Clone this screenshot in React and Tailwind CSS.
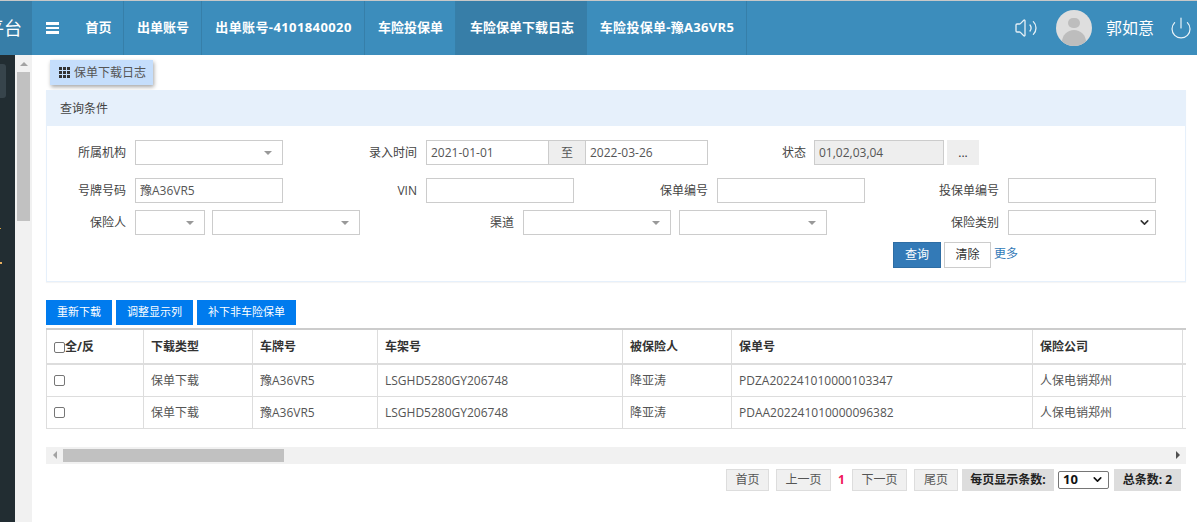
import React from 'react';
import { ChevronDown, Power, Volume2 } from 'lucide-react';

const font = { fontFamily: '"Open Sans", "Noto Sans CJK SC", sans-serif' };

const tabs = [
  { name: '首页', w: 'w-[51px]' },
  { name: '出单账号', w: 'w-[78px]' },
  { name: '出单账号-4101840020', w: 'w-[163px]', extra: 'tracking-[0.4px]' },
  { name: '车险投保单', w: 'w-[91px]' },
  { name: '车险保单下载日志', w: 'w-[131px]', active: true },
  { name: '车险投保单-豫A36VR5', w: 'w-[160px]', extra: 'tracking-[0.3px]' },
];

const rows = [
  { policy: 'PDZA202241010000103347' },
  { policy: 'PDAA202241010000096382' },
];

function Label({ w, children }) {
  return <label className={`${w} shrink-0 pt-px text-right text-[12px] text-[#444]`}>{children}</label>;
}

function Select2({ w, ml = 'ml-[9px]' }) {
  return (
    <div className={`${w} ${ml} flex h-[25px] shrink-0 items-center justify-end border border-[#ccc] bg-white pr-[10px]`}>
      <span className="h-0 w-0 border-x-[4px] border-t-[4px] border-x-transparent border-t-[#999]" />
    </div>
  );
}

function Input({ w = 'w-[148px]', ml = 'ml-[9px]', value = '', extra = 'bg-white' }) {
  return (
    <div className={`${w} ${ml} flex h-[25px] shrink-0 items-center border border-[#ccc] ${extra} px-[4px] text-[12px] text-[#555]`}>
      {value}
    </div>
  );
}

function Check() {
  return <span className="inline-block h-[11px] w-[11px] rounded-[2px] border border-[#767676] bg-white" />;
}

function PageBtn({ w, children }) {
  return (
    <div className={`${w} flex h-[22px] items-center justify-center border border-[#ddd] bg-[#f0f0f0] text-[12px] text-[#555]`}>
      {children}
    </div>
  );
}

const cell = 'border-r border-[#ddd] px-[7px] pt-px text-[12px]';

export default function App() {
  return (
    <div className="flex h-[522px] w-[1197px] flex-col overflow-hidden bg-white" style={font}>
      {/* top bar */}
      <div className="h-px bg-[#c8c8c8]" />
      <header className="flex h-[54px] items-stretch bg-[#3c8dbc] text-white">
        <div className="flex w-[32px] items-center justify-end overflow-hidden bg-[#377ea8]">
          <span className="whitespace-nowrap pr-[10px] text-[18px] leading-none">管理平台</span>
        </div>
        <div className="flex w-[41px] items-center pl-[14px]">
          <div className="flex w-[13px] flex-col gap-[2px]">
            <span className="h-[3px] bg-white" />
            <span className="h-[2px] bg-white" />
            <span className="h-[3px] bg-white" />
          </div>
        </div>
        {tabs.map((t) => (
          <div
            key={t.name}
            className={`${t.w} ${t.extra || ''} flex items-center justify-center whitespace-nowrap pl-px text-[13px] font-bold ${
              t.active ? 'bg-[#377ea8]' : 'border-r border-[#367fa9]'
            }`}
          >
            {t.name}
          </div>
        ))}
        <div className="flex flex-1 items-center justify-end">
          <Volume2 className="h-[24px] w-[24px] text-[#e6f0f6]" strokeWidth={1.3} />
          <div className="ml-[18px] flex h-[36px] w-[36px] flex-col items-center overflow-hidden rounded-full bg-[#dedede]">
            <span className="mt-[8px] h-[12px] w-[12px] rounded-full bg-[#bdbdbd]" />
            <span className="mt-[2px] h-[20px] w-[24px] rounded-t-full bg-[#bdbdbd]" />
          </div>
          <span className="ml-[14px] w-[49px] whitespace-nowrap text-[16px]">郭如意</span>
          <Power className="ml-[14px] mr-[4px] h-[24px] w-[24px] text-[#eaf3f8]" strokeWidth={1.2} />
        </div>
      </header>

      <div className="flex flex-1 overflow-hidden">
        {/* collapsed side menu with its scrollbar */}
        <aside className="flex w-[32px] shrink-0">
          <div className="w-[15px] bg-[#222d32] pt-[9px]">
            <div className="h-[34px] w-[6px] rounded-r-[3px] bg-[#37444b]" />
            <div className="mt-[130px] h-px w-[1px] bg-[#d9a441]" />
            <div className="mt-[33px] h-[2px] w-[2px] bg-[#e8b060]" />
          </div>
          <div className="w-[17px] bg-[#f1f1f1] px-[2px]">
            <div className="flex h-[17px] items-center justify-center">
              <span className="h-0 w-0 border-x-[4px] border-b-[4px] border-x-transparent border-b-[#a3a3a3]" />
            </div>
            <div className="h-[149px] w-[13px] bg-[#c1c1c1]" />
          </div>
        </aside>

        <main className="w-[1154px] pl-[14px]">
          <div className="ml-[4px] mt-[5px] flex h-[25px] w-[103px] items-center bg-[#c5defc] pl-[9px] text-[12px] text-[#555] shadow-[1px_2px_4px_rgba(0,0,0,0.35)]">
            <span className="grid w-[11px] grid-cols-3 gap-px">
              {[0, 1, 2, 3, 4, 5, 6, 7, 8].map((i) => (
                <span key={i} className="h-[3px] w-[3px] bg-[#333]" />
              ))}
            </span>
            <span className="ml-[4px] whitespace-nowrap">保单下载日志</span>
          </div>

          {/* query panel */}
          <section className="mt-[5px] h-[192px] w-[1140px] border-x border-b border-[#e6f0fb] shadow-[0_1px_1px_rgba(0,0,0,0.04)]">
            <div className="-mx-px flex h-[36px] items-center bg-[#e6f0fb] pl-[14px] pt-px text-[12px] text-[#444]">查询条件</div>
            <div className="pt-[14px]">
              <div className="flex items-center">
                <Label w="w-[79px]">所属机构</Label>
                <Select2 w="w-[148px]" />
                <Label w="w-[134px]">录入时间</Label>
                <Input w="w-[123px]" value="2021-01-01" />
                <div className="flex h-[25px] w-[36px] shrink-0 items-center justify-center border-y border-[#ccc] bg-[#eee] text-[12px] text-[#555]">至</div>
                <Input w="w-[123px]" ml="ml-0" value="2022-03-26" />
                <Label w="w-[98px]">状态</Label>
                <Input w="w-[130px]" ml="ml-[8px]" value="01,02,03,04" extra="bg-[#eee]" />
                <div className="ml-[3px] flex h-[25px] w-[32px] items-center justify-center bg-[#eee] text-[12px] text-[#333]">...</div>
              </div>
              <div className="mt-[13px] flex items-center">
                <Label w="w-[79px]">号牌号码</Label>
                <Input value="豫A36VR5" />
                <Label w="w-[134px]">VIN</Label>
                <Input />
                <Label w="w-[134px]">保单编号</Label>
                <Input />
                <Label w="w-[134px]">投保单编号</Label>
                <Input />
              </div>
              <div className="mt-[7px] flex items-center">
                <Label w="w-[79px]">保险人</Label>
                <Select2 w="w-[70px]" />
                <Select2 w="w-[148px]" ml="ml-[7px]" />
                <Label w="w-[154px]">渠道</Label>
                <Select2 w="w-[148px]" />
                <Select2 w="w-[148px]" ml="ml-[8px]" />
                <Label w="w-[172px]">保险类别</Label>
                <div className="ml-[9px] flex h-[25px] w-[148px] items-center justify-end border border-[#ccc] bg-white pr-[4px]">
                  <ChevronDown className="h-[13px] w-[13px] text-[#333]" strokeWidth={3} />
                </div>
              </div>
              <div className="mt-[7px] flex items-start pl-[846px]">
                <button className="h-[26px] w-[48px] border border-[#2e6da4] bg-[#337ab7] text-[12px] text-white">查询</button>
                <button className="ml-[3px] h-[26px] w-[47px] border border-[#ccc] bg-white text-[12px] text-[#333]">清除</button>
                <a className="ml-[3px] mt-[3px] text-[12px] text-[#337ab7]">更多</a>
              </div>
            </div>
          </section>

          {/* toolbar */}
          <div className="mt-[18px] flex gap-[4px] text-[11px] text-white">
            <button className="h-[25px] w-[66px] bg-[#007bee]">重新下载</button>
            <button className="h-[25px] w-[77px] bg-[#007bee]">调整显示列</button>
            <button className="h-[25px] w-[99px] bg-[#007bee]">补下非车险保单</button>
          </div>

          {/* result table */}
          <div className="mt-[3px] w-[1140px] overflow-hidden">
            <table className="w-[1160px] table-fixed border-collapse border-t-2 border-[#ccc] text-[#555]">
              <colgroup>
                <col className="w-[97px]" />
                <col className="w-[109px]" />
                <col className="w-[125px]" />
                <col className="w-[245px]" />
                <col className="w-[109px]" />
                <col className="w-[301px]" />
                <col className="w-[150px]" />
                <col className="w-[24px]" />
              </colgroup>
              <thead>
                <tr className="h-[35px] border-b-2 border-[#ddd] text-left text-[#333]">
                  <th className={`${cell} border-l font-bold`}>
                    <span className="flex items-center">
                      <Check />
                      全/反
                    </span>
                  </th>
                  <th className={`${cell} font-bold`}>下载类型</th>
                  <th className={`${cell} font-bold`}>车牌号</th>
                  <th className={`${cell} font-bold`}>车架号</th>
                  <th className={`${cell} font-bold`}>被保险人</th>
                  <th className={`${cell} font-bold`}>保单号</th>
                  <th className={`${cell} font-bold`}>保险公司</th>
                  <th className={cell} />
                </tr>
              </thead>
              <tbody>
                {rows.map((r) => (
                  <tr key={r.policy} className="h-[32px] border-b border-[#ddd]">
                    <td className={`${cell} border-l`}>
                      <span className="flex items-center">
                        <Check />
                      </span>
                    </td>
                    <td className={cell}>保单下载</td>
                    <td className={cell}>豫A36VR5</td>
                    <td className={cell}>LSGHD5280GY206748</td>
                    <td className={cell}>降亚涛</td>
                    <td className={cell}>{r.policy}</td>
                    <td className={cell}>人保电销郑州</td>
                    <td className={cell} />
                  </tr>
                ))}
              </tbody>
            </table>
          </div>

          {/* horizontal scrollbar */}
          <div className="mt-[18px] flex h-[17px] w-[1140px] items-center bg-[#f1f1f1]">
            <div className="flex w-[17px] justify-center">
              <span className="h-0 w-0 border-y-[4px] border-r-[4px] border-y-transparent border-r-[#a3a3a3]" />
            </div>
            <div className="h-[13px] w-[221px] bg-[#c1c1c1]" />
            <div className="flex flex-1 justify-end pr-[6px]">
              <span className="h-0 w-0 border-y-[4px] border-l-[4px] border-y-transparent border-l-[#505050]" />
            </div>
          </div>

          {/* pagination */}
          <div className="mt-[5px] flex h-[22px] w-[1135px] items-center justify-end">
            <PageBtn w="w-[43px]">首页</PageBtn>
            <div className="ml-[7px]"><PageBtn w="w-[55px]">上一页</PageBtn></div>
            <span className="w-[21px] text-center text-[12px] font-bold text-[#f0145a]">1</span>
            <PageBtn w="w-[55px]">下一页</PageBtn>
            <div className="ml-[7px]"><PageBtn w="w-[44px]">尾页</PageBtn></div>
            <div className="ml-[4px] flex h-[22px] w-[92px] items-center justify-center bg-[#ddd] text-[12px] font-bold text-[#222]">每页显示条数:</div>
            <div className="ml-[4px] flex h-[18px] w-[51px] items-center justify-between rounded-[2px] border border-[#767676] bg-white px-[4px] text-[13px] font-bold text-[#111]">
              10
              <ChevronDown className="h-[13px] w-[13px]" strokeWidth={3} />
            </div>
            <div className="ml-[5px] flex h-[22px] w-[67px] items-center justify-center bg-[#ddd] text-[12px] font-bold text-[#222]">总条数: 2</div>
          </div>
        </main>
      </div>
    </div>
  );
}
